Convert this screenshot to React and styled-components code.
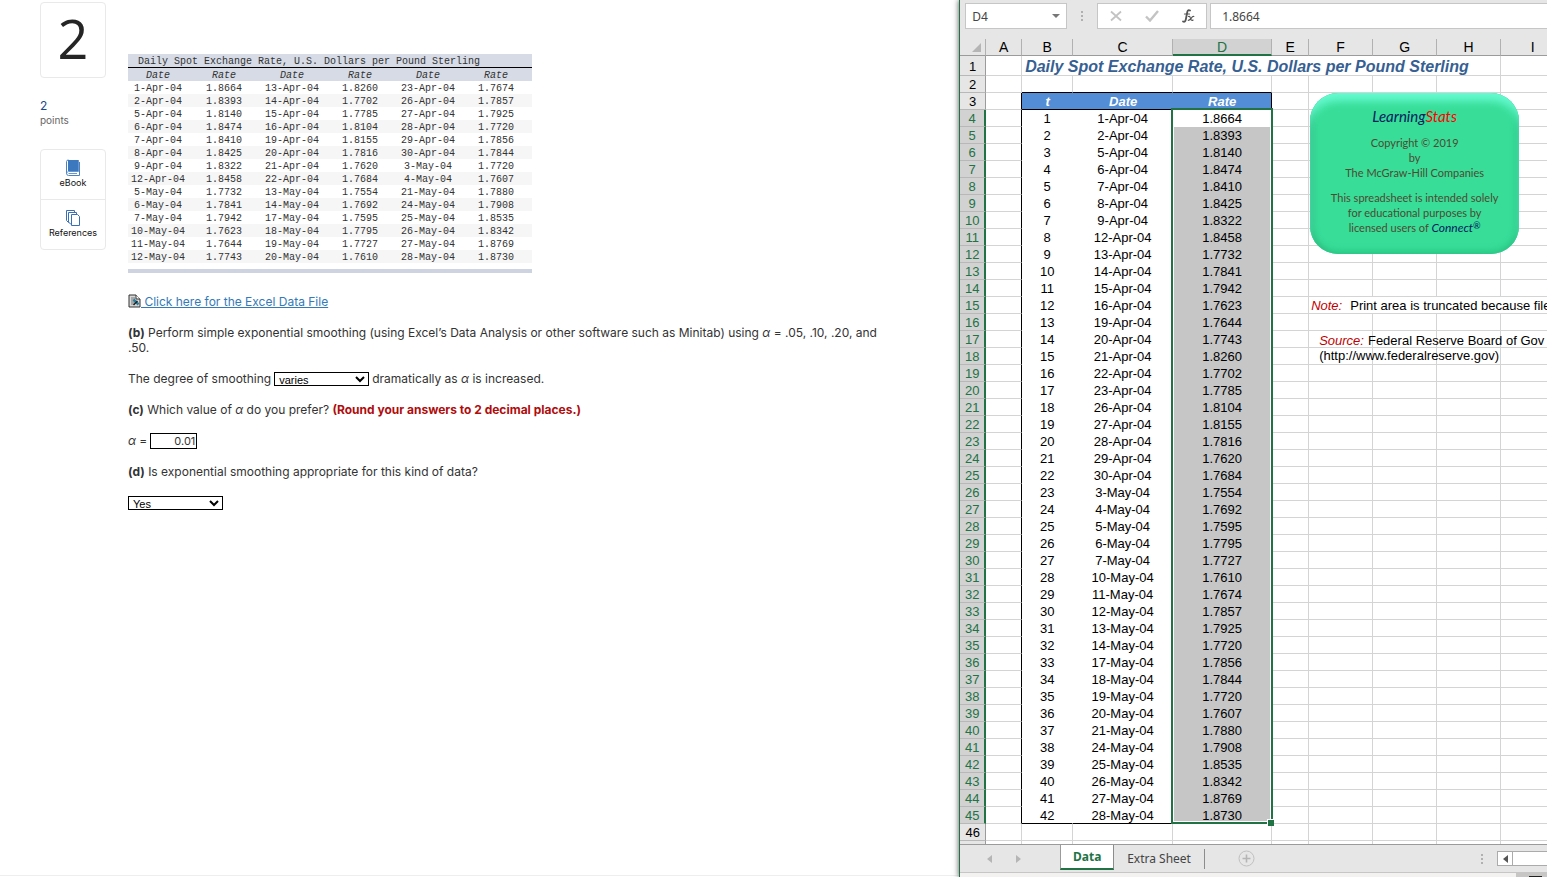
import React, { useState } from 'react'
import styled, { createGlobalStyle, css } from 'styled-components'

const GlobalStyle = createGlobalStyle`
  * {
    box-sizing: border-box;
  }
  body {
    margin: 0;
    background: #fff;
  }
`

const proxima = "'Inter', 'Open Sans', sans-serif"
const arial = "'Liberation Sans', Arial, sans-serif"
const segoe = "'Noto Sans', 'Open Sans', sans-serif"
const excelGreen = '#217346'
const gridLine = '#d4d4d4'

const dates = [
  '1-Apr-04', '2-Apr-04', '5-Apr-04', '6-Apr-04', '7-Apr-04', '8-Apr-04', '9-Apr-04',
  '12-Apr-04', '13-Apr-04', '14-Apr-04', '15-Apr-04', '16-Apr-04', '19-Apr-04', '20-Apr-04',
  '21-Apr-04', '22-Apr-04', '23-Apr-04', '26-Apr-04', '27-Apr-04', '28-Apr-04', '29-Apr-04',
  '30-Apr-04', '3-May-04', '4-May-04', '5-May-04', '6-May-04', '7-May-04', '10-May-04',
  '11-May-04', '12-May-04', '13-May-04', '14-May-04', '17-May-04', '18-May-04', '19-May-04',
  '20-May-04', '21-May-04', '24-May-04', '25-May-04', '26-May-04', '27-May-04', '28-May-04'
]

const rates = [
  '1.8664', '1.8393', '1.8140', '1.8474', '1.8410', '1.8425', '1.8322',
  '1.8458', '1.7732', '1.7841', '1.7942', '1.7623', '1.7644', '1.7743',
  '1.8260', '1.7702', '1.7785', '1.8104', '1.8155', '1.7816', '1.7620',
  '1.7684', '1.7554', '1.7692', '1.7595', '1.7795', '1.7727', '1.7610',
  '1.7674', '1.7857', '1.7925', '1.7720', '1.7856', '1.7844', '1.7720',
  '1.7607', '1.7880', '1.7908', '1.8535', '1.8342', '1.8769', '1.8730'
]

const Page = styled.main`
  display: grid;
  grid-template-columns: minmax(0, 1fr) 38%;
  height: 100vh;
  overflow: hidden;
`

/* Question pane */

const QuestionPane = styled.section`
  display: flex;
  align-items: flex-start;
  gap: 22px;
  padding: 2px 40px 0;
  margin-bottom: 1px;
  border-bottom: 1px solid #eee;
  font-family: ${proxima};
  color: #333;
`

const Aside = styled.aside`
  flex: none;
  width: 66px;
`

const QuestionNumber = styled.h1`
  height: 76px;
  margin: 0 0 21px;
  border: 1px solid #e9e9e9;
  border-radius: 4px;
  font-family: 'Open Sans', sans-serif;
  font-size: 54px;
  line-height: 70px;
  font-weight: 400;
  text-align: center;
  color: #252525;
`

const Points = styled.p`
  margin: 0 0 22px;
  font-size: 10px;
  line-height: 14px;
  color: #666;
`

const PointsValue = styled.span`
  display: block;
  font-size: 12px;
  color: #1a4a8a;
`

const ToolLinks = styled.nav`
  border: 1px solid #e9e9e9;
  border-radius: 4px;
`

const ToolLink = styled.a`
  display: flex;
  flex-direction: column;
  align-items: center;
  height: 49px;
  padding-top: 9px;
  font-size: 9px;
  line-height: 14px;
  color: #111;
  text-decoration: none;
  & + & {
    height: 50px;
    border-top: 1px solid #e9e9e9;
  }
`

const Content = styled.div`
  flex: 1;
  min-width: 0;
  max-width: 755px;
  padding-top: 52px;
`

const RateTable = styled.table`
  width: 404px;
  margin-bottom: 21px;
  border-spacing: 0;
  border-bottom: 4px solid #cdd3e0;
  padding-bottom: 6px;
  table-layout: fixed;
  font-family: 'Liberation Mono', monospace;
  font-size: 10px;
  line-height: 11px;
  text-align: center;
  th, td {
    height: 13px;
    padding: 2px 0 0;
    font-weight: 400;
  }
  thead {
    background: #d6dbe6;
  }
  thead tr + tr th {
    font-style: italic;
  }
  tbody tr:nth-child(even) {
    background: #f6f6f6;
  }
`

const RateTitle = styled.th`
  && {
    height: 14px;
    padding-left: 10px;
    border-bottom: 1px solid #000;
    text-align: left;
  }
`

const FileLink = styled.a`
  display: flex;
  align-items: center;
  height: 15px;
  margin-bottom: 16px;
  font-size: 12px;
  line-height: 15px;
  color: #337ab7;
  text-decoration: none;
  span {
    text-decoration: underline;
    white-space: pre;
  }
`

const Text = styled.p`
  display: block;
  margin: 0 0 16px;
  font-size: 12px;
  line-height: 15px;
`

const Line = styled(Text)`
  display: flex;
  align-items: center;
  gap: 3px;
  height: 15px;
`

const Warning = styled.strong`
  color: #b00c0c;
`

const Choice = styled.select`
  width: 95px;
  height: 14px;
  padding: 0;
  border: 1px solid #000;
  border-radius: 0;
  background: #fff;
  font-family: ${arial};
  font-size: 11px;
  line-height: 12px;
  color: #000;
`

const Answer = styled.input`
  width: 47px;
  height: 16px;
  padding: 0 1px;
  border: 1px solid #000;
  font-family: ${proxima};
  font-size: 11px;
  color: #333;
  text-align: right;
`

/* Spreadsheet pane */

const Workbook = styled.section`
  z-index: 1;
  display: flex;
  flex-direction: column;
  min-width: 0;
  height: 100vh;
  overflow: hidden;
  border-left: 1px solid ${excelGreen};
  box-shadow: -1px 0 5px rgba(0, 0, 0, 0.5);
  background: #e6e6e6;
  font-family: ${arial};
`

const FormulaBar = styled.div`
  display: flex;
  flex: none;
  height: 39px;
  padding: 3px 0 10px 5px;
`

const barBox = css`
  display: flex;
  align-items: center;
  border: 1px solid #c6c6c6;
  background: #fff;
`

const NameBox = styled.div`
  ${barBox}
  width: 102px;
  padding: 0 6px;
`

const BarInput = styled.input`
  flex: 1;
  min-width: 0;
  padding: 0;
  border: 0;
  background: none;
  font-family: ${segoe};
  font-size: 12px;
  color: #444;
`

const IconButton = styled.button`
  display: flex;
  align-items: center;
  justify-content: center;
  padding: 0;
  border: 0;
  background: none;
`

const Grip = styled.div`
  display: flex;
  flex-direction: column;
  justify-content: center;
  gap: 2px;
  width: 2px;
  margin: 0 14px;
  i {
    width: 2px;
    height: 2px;
    background: #b0b0b0;
  }
`

const FormulaButtons = styled.div`
  ${barBox}
  justify-content: space-around;
  width: 110px;
  margin-right: 3px;
`

const FormulaBox = styled.div`
  ${barBox}
  flex: 1;
  min-width: 0;
  padding-left: 11px;
  border-right: 0;
`

const Sheet = styled.div`
  position: relative;
  flex: 1;
  min-height: 0;
  overflow: hidden;
  background: #fff;
`

const Grid = styled.table`
  width: max(100%, 605px);
  border-spacing: 0;
  table-layout: fixed;
  font-size: 13px;
  line-height: 14px;
  color: #000;
`

const ColHead = styled.th`
  height: 17px;
  padding: 0;
  border-right: 1px solid #b1b1b1;
  border-bottom: 1px solid #9b9b9b;
  background: #e6e6e6;
  font-size: 14px;
  font-weight: 400;
  line-height: 14px;
  ${props => props.$active && css`
    border-bottom: 2px solid ${excelGreen};
    background: #d2d2d2;
    color: ${excelGreen};
  `}
  svg {
    display: block;
    margin: 2px 3px 0 auto;
  }
`

const RowHead = styled.th`
  height: ${props => props.$tall ? 20 : 17}px;
  padding: 2px 0 0;
  border-right: 1px solid #9b9b9b;
  border-bottom: 1px solid #b8b8b8;
  background: #e6e6e6;
  font-weight: 400;
  ${props => props.$active && css`
    border-right: 2px solid ${excelGreen};
    background: #d2d2d2;
    color: ${excelGreen};
  `}
`

const Cell = styled.td`
  padding: 2px 0 0;
  border-right: 1px solid ${props => props.$edge ? '#000' : gridLine};
  border-bottom: 1px solid ${props => props.$ruled ? '#000' : gridLine};
  white-space: nowrap;
`

const DataCell = styled.td`
  padding: 2px 0 0;
  border-right: 1px solid ${props => props.$edge ? '#000' : 'transparent'};
  border-bottom: 1px solid ${props => props.$last ? '#000' : 'transparent'};
  background: ${props => props.$selected ? '#c6c6c6' : '#fff'};
  text-align: center;
`

const HeadCell = styled.th`
  padding: 2px 0 0;
  border-bottom: 1px solid #000;
  border-right: ${props => props.$edge ? '1px solid #000' : 0};
  background: #538dd5;
  color: #fff;
  font-style: italic;
`

const TitleCell = styled(Cell)`
  padding-left: 3px;
  font-size: 16px;
  line-height: 17px;
  font-weight: 700;
  font-style: italic;
  color: #366092;
`

const NoteCell = styled(Cell)`
  padding-left: 2px;
`

const RedLabel = styled.em`
  margin-right: ${props => props.$wide ? 8 : 4}px;
  color: #c00000;
`

const Selection = styled.div`
  position: absolute;
  top: 69px;
  left: 211px;
  width: 102px;
  height: 716px;
  border: 2px solid ${excelGreen};
  box-shadow: inset 0 0 0 1px #fff;
  &::after {
    content: '';
    position: absolute;
    right: -3px;
    bottom: -4px;
    width: 6px;
    height: 6px;
    border: 1px solid #fff;
    border-width: 1px 0 0 1px;
    background: ${excelGreen};
  }
`

const SourceBox = styled.div`
  position: absolute;
  top: 294px;
  left: 359px;
  font-size: 13px;
  line-height: 15px;
  white-space: nowrap;
  color: #000;
`

const Notice = styled.div`
  position: absolute;
  top: 54px;
  left: 350px;
  width: 209px;
  height: 161px;
  padding-top: 16px;
  border-radius: 28px;
  background: #38dd98;
  box-shadow:
    inset 0 10px 8px -2px #66fbd0,
    inset 5px 0 6px -2px #2fbd81,
    inset -5px 0 6px -2px #2cc587,
    inset 0 -6px 6px -2px #2fd08c;
  font-family: Lato, sans-serif;
  font-size: 11px;
  line-height: 15px;
  text-align: center;
  color: #4f4a32;
  p {
    margin: 0 0 10px;
  }
`

const Brand = styled.em`
  font-size: 15px;
  color: #002060;
  span {
    color: #f00;
  }
`

const Connect = styled.em`
  font-size: 12px;
  color: #002060;
  sup {
    font-size: 9px;
    line-height: 0;
    vertical-align: 3px;
  }
`

const TabBar = styled.footer`
  display: flex;
  flex: none;
  align-items: center;
  height: 29px;
  border-top: 1px solid #9b9b9b;
  border-bottom: 1px solid #c6c6c6;
  font-family: ${segoe};
`

const TabArrows = styled.div`
  display: flex;
  gap: 24px;
  width: 100px;
  padding-left: 27px;
`

const Tab = styled.button`
  height: 20px;
  padding: 0 13px;
  border: 0;
  border-right: 1px solid #8c8c8c;
  background: none;
  font-family: inherit;
  font-size: 12px;
  line-height: 16px;
  color: #444;
  ${props => props.$active && css`
    align-self: flex-start;
    width: 54px;
    height: 25px;
    padding: 1px 0 0;
    border-left: 1px solid #9b9b9b;
    border-bottom: 2px solid ${excelGreen};
    background: #fff;
    font-weight: 700;
    color: ${excelGreen};
  `}
`

const AddTab = styled(IconButton)`
  margin: 0 auto 0 33px;
`

const ScrollArea = styled.div`
  display: flex;
  width: 50px;
  height: 15px;
  border: 1px solid #ababab;
  border-right: 0;
  background: #fff;
`

const ScrollButton = styled(IconButton)`
  width: 15px;
  border-right: 1px solid #ababab;
`

const StatusBar = styled.div`
  display: flex;
  flex: none;
  justify-content: flex-end;
  height: 4px;
  background: #f3f2f1;
`

const ViewButton = styled.div`
  display: flex;
  align-items: flex-end;
  width: 31px;
  padding-left: 13px;
  background: #c8c6c4;
  &::after {
    content: '';
    width: 13px;
    height: 1px;
    background: #222;
  }
`

const Arrow = ({ dir, color = '#b5b5b5' }) => (
  <svg width="5" height="8" viewBox="0 0 5 8">
    <path d={dir === 'left' ? 'M5 0v8L0 4z' : 'M0 0v8l5-4z'} fill={color} />
  </svg>
)

const BookIcon = () => (
  <svg width="16" height="17" viewBox="0 0 16 17">
    <path d="M3 1h10v11H3z" fill="#3b78bd" />
    <path d="M3.500 1Q1.500 1 1.500 2.500V14q0 2.500 2 2.500h11V3" fill="none" stroke="#4a83c3" />
    <path d="M13.500 1v11.500h-10q-1.500.2-1.500 1.300M3.500 14.500H12" fill="none" stroke="#6a97cf" />
  </svg>
)

const PagesIcon = () => (
  <svg width="16" height="17" viewBox="0 0 16 17">
    <g fill="#fff" stroke="#3b6fb5">
      <path d="M1.500 1.500h8v12h-6l-2-2z" />
      <path d="M3.500 3.500h8v11.500H5.500l-2-2z" />
      <path d="M6.500 5.500h6l2 2v9h-8z" />
    </g>
  </svg>
)

const FileIcon = () => (
  <svg width="13" height="15" viewBox="0 0 13 15">
    <path d="M1 1h7l4 4v8H1z" fill="#d8d8d8" stroke="#333" />
    <path d="M8 1v4h4" fill="#fff" stroke="#333" />
    <path d="M3 4h4M3 6h3M3 8h4M3 10h4" stroke="#777" />
    <path d="M5.500 5.500l5 5" stroke="#2a7f9e" strokeWidth="2.500" />
    <path d="M5.500 11l4-4" stroke="#222" strokeWidth="1.500" />
  </svg>
)

const SelectAllIcon = () => (
  <svg width="11" height="10" viewBox="0 0 11 10">
    <path d="M10 0v9H1z" fill="#b5b5b5" />
  </svg>
)

const Dots = () => <Grip><i /><i /><i /></Grip>

const RatesByDate = () => {
  const rows = Array.from({ length: 14 }, (_, row) => [0, 1, 2].map(block => ({
    date: row < 8 ? dates[block * 8 + row] : dates[16 + block * 6 + row],
    rate: rates[block * 14 + row]
  })))

  return (
    <RateTable>
      <colgroup>
        <col width="60" /><col width="72" />
        <col width="64" /><col width="72" />
        <col width="64" /><col width="72" />
      </colgroup>
      <thead>
        <tr>
          <RateTitle colSpan={6}>Daily Spot Exchange Rate, U.S. Dollars per Pound Sterling</RateTitle>
        </tr>
        <tr>
          {[0, 1, 2].map(block => (
            <React.Fragment key={block}><th>Date</th><th>Rate</th></React.Fragment>
          ))}
        </tr>
      </thead>
      <tbody>
        {rows.map((row, i) => (
          <tr key={i}>
            {row.map(item => (
              <React.Fragment key={item.date}><td>{item.date}</td><td>{item.rate}</td></React.Fragment>
            ))}
          </tr>
        ))}
      </tbody>
    </RateTable>
  )
}

const Question = () => {
  const [degree, setDegree] = useState('varies')
  const [alpha, setAlpha] = useState('0.01')
  const [suitable, setSuitable] = useState('Yes')

  return (
    <QuestionPane>
      <Aside>
        <QuestionNumber>2</QuestionNumber>
        <Points><PointsValue>2</PointsValue>points</Points>
        <ToolLinks>
          <ToolLink href="#ebook"><BookIcon />eBook</ToolLink>
          <ToolLink href="#references"><PagesIcon />References</ToolLink>
        </ToolLinks>
      </Aside>
      <Content>
        <RatesByDate />
        <FileLink href="#data"><FileIcon /><span> Click here for the Excel Data File</span></FileLink>
        <Text>
          <b>(b)</b> Perform simple exponential smoothing (using Excel’s Data Analysis or other
          software such as Minitab) using <i>α</i> = .05, .10, .20, and .50.
        </Text>
        <Line>
          <label htmlFor="degree">The degree of smoothing</label>
          <Choice id="degree" value={degree} onChange={e => setDegree(e.target.value)}>
            <option>varies</option>
            <option>does not vary</option>
          </Choice>
          <span>dramatically as <i>α</i> is increased.</span>
        </Line>
        <Text>
          <b>(c)</b> Which value of <i>α</i> do you prefer?{' '}
          <Warning>(Round your answers to 2 decimal places.)</Warning>
        </Text>
        <Line>
          <label htmlFor="alpha"><i>α</i> =</label>
          <Answer id="alpha" value={alpha} onChange={e => setAlpha(e.target.value)} />
        </Line>
        <Text as="label" htmlFor="suitable">
          <b>(d)</b> Is exponential smoothing appropriate for this kind of data?
        </Text>
        <Line>
          <Choice id="suitable" value={suitable} onChange={e => setSuitable(e.target.value)}>
            <option>Yes</option>
            <option>No</option>
          </Choice>
        </Line>
      </Content>
    </QuestionPane>
  )
}

const EmptyCells = ({ count }) => Array.from({ length: count }, (_, i) => <Cell key={i} />)

const SheetGrid = () => (
  <Grid>
    <colgroup>
      <col width="26" /><col width="36" /><col width="51" /><col width="100" />
      <col width="99" /><col width="37" /><col width="64" /><col width="64" />
      <col width="64" /><col />
    </colgroup>
    <thead>
      <tr>
        <ColHead><SelectAllIcon /></ColHead>
        {'ABCDEFGHI'.split('').map(letter => (
          <ColHead key={letter} $active={letter === 'D'}>{letter}</ColHead>
        ))}
      </tr>
    </thead>
    <tbody>
      <tr>
        <RowHead $tall>1</RowHead>
        <Cell />
        <TitleCell colSpan={7}>Daily Spot Exchange Rate, U.S. Dollars per Pound Sterling</TitleCell>
        <Cell />
      </tr>
      <tr>
        <RowHead>2</RowHead>
        <Cell />
        <Cell $ruled /><Cell $ruled /><Cell $ruled />
        <EmptyCells count={5} />
      </tr>
      <tr>
        <RowHead>3</RowHead>
        <Cell $edge />
        <HeadCell>t</HeadCell>
        <HeadCell>Date</HeadCell>
        <HeadCell $edge>Rate</HeadCell>
        <EmptyCells count={5} />
      </tr>
      {dates.map((date, i) => {
        const last = i === dates.length - 1
        return (
          <tr key={date}>
            <RowHead $active>{i + 4}</RowHead>
            <Cell $edge />
            <DataCell $last={last}>{i + 1}</DataCell>
            <DataCell $last={last}>{date}</DataCell>
            <DataCell $last={last} $edge $selected={i > 0}>{rates[i]}</DataCell>
            <Cell />
            {i === 11 ? (
              <NoteCell colSpan={4}>
                <RedLabel $wide>Note:</RedLabel>Print area is truncated because file
              </NoteCell>
            ) : <EmptyCells count={4} />}
          </tr>
        )
      })}
      <tr>
        <RowHead>46</RowHead>
        <EmptyCells count={9} />
      </tr>
      <tr>
        <RowHead />
        <EmptyCells count={9} />
      </tr>
    </tbody>
  </Grid>
)

const Spreadsheet = () => {
  const [cell, setCell] = useState('D4')
  const [formula, setFormula] = useState('1.8664')

  return (
    <Workbook>
      <FormulaBar>
        <NameBox>
          <BarInput aria-label="Name box" value={cell} onChange={e => setCell(e.target.value)} />
          <IconButton aria-label="Open name list">
            <svg width="8" height="5" viewBox="0 0 8 5"><path d="M0 0h8L4 4z" fill="#777" /></svg>
          </IconButton>
        </NameBox>
        <Dots />
        <FormulaButtons>
          <IconButton aria-label="Cancel">
            <svg width="12" height="12" viewBox="0 0 12 12">
              <path d="M1 1.500l10 9M11 1.500l-10 9" stroke="#c3c3c3" strokeWidth="1.800" />
            </svg>
          </IconButton>
          <IconButton aria-label="Enter">
            <svg width="14" height="12" viewBox="0 0 14 12">
              <path d="M1 6.500l4 4L13 1" fill="none" stroke="#c3c3c3" strokeWidth="2.400" />
            </svg>
          </IconButton>
          <IconButton aria-label="Insert function">
            <svg width="13" height="14" viewBox="0 0 13 14">
              <g fill="none" stroke="#555" strokeLinecap="round">
                <path d="M8 1.500Q6 .3 5.300 3L3.800 10.500Q3.200 13.500 1 12.500" strokeWidth="1.800" />
                <path d="M2.500 5h5" strokeWidth="1.200" />
                <path d="M6.500 7.500q1.200-.5 1.700 1l.8 2q.6 1.300 2 .6M11.800 7.500q-1.200-.3-2.500 1.700T6.300 11.300" strokeWidth="1.200" />
              </g>
            </svg>
          </IconButton>
        </FormulaButtons>
        <FormulaBox>
          <BarInput aria-label="Formula" value={formula} onChange={e => setFormula(e.target.value)} />
        </FormulaBox>
      </FormulaBar>

      <Sheet>
        <SheetGrid />
        <Selection />
        <Notice>
          <p><Brand>Learning<span>Stats</span></Brand></p>
          <p>Copyright © 2019<br />by<br />The McGraw-Hill Companies</p>
          <p>
            This spreadsheet is intended solely<br />for educational purposes by<br />
            licensed users of <Connect>Connect<sup>®</sup></Connect>
          </p>
        </Notice>
        <SourceBox>
          <RedLabel>Source:</RedLabel>Federal Reserve Board of Gov<br />
          (http://www.federalreserve.gov)
        </SourceBox>
      </Sheet>

      <TabBar>
        <TabArrows><Arrow dir="left" /><Arrow dir="right" /></TabArrows>
        <Tab $active>Data</Tab>
        <Tab>Extra Sheet</Tab>
        <AddTab aria-label="New sheet">
          <svg width="17" height="17" viewBox="0 0 17 17">
            <circle cx="8.500" cy="8.500" r="7.500" fill="none" stroke="#c0c0c0" />
            <path d="M8.500 4.500v8M4.500 8.500h8" stroke="#b5b5b5" strokeWidth="1.600" />
          </svg>
        </AddTab>
        <Dots />
        <ScrollArea>
          <ScrollButton aria-label="Scroll left"><Arrow dir="left" color="#555" /></ScrollButton>
        </ScrollArea>
      </TabBar>
      <StatusBar><ViewButton /></StatusBar>
    </Workbook>
  )
}

const App = () => (
  <Page>
    <GlobalStyle />
    <Question />
    <Spreadsheet />
  </Page>
)

export default App
